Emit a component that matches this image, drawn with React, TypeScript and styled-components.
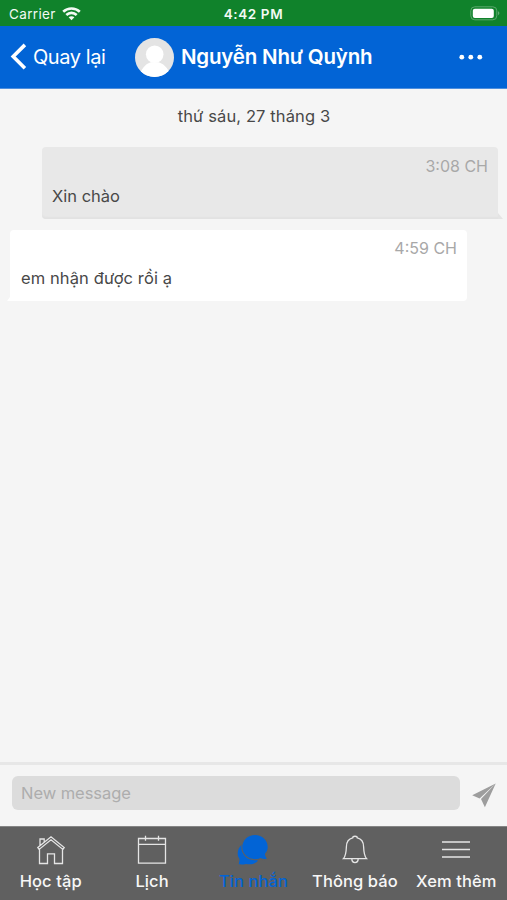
import React from 'react';
import styled, { createGlobalStyle } from 'styled-components';

const GlobalStyle = createGlobalStyle`
  * { box-sizing: border-box; }
  body { margin: 0; background: #f5f5f5; }
  svg { display: block; flex: none; }
`;

const Screen = styled.div`
  width: 507px;
  height: 900px;
  display: flex;
  flex-direction: column;
  overflow: hidden;
  background: #f5f5f5;
  color: #484848;
  font-family: Inter, 'Noto Sans', sans-serif;
  font-size: 17px;
  white-space: nowrap;
`;

const StatusBar = styled.header`
  height: 26px;
  flex: none;
  display: grid;
  grid-template-columns: 1fr auto 1fr;
  align-items: center;
  padding: 1px 7px 0 9px;
  background: #10822b;
  color: #f3faf4;
  font-size: 13.5px;
`;

const Carrier = styled.div`
  display: flex;
  align-items: center;
  gap: 6px;
  letter-spacing: 0.35px;
`;

const Clock = styled.div`
  margin-right: 2px;
  font-weight: 600;
  letter-spacing: 0.6px;
`;

const BatterySlot = styled.div`
  display: flex;
  justify-content: flex-end;
`;

const NavBar = styled.nav`
  height: 63px;
  flex: none;
  display: flex;
  align-items: center;
  padding: 0 24px 0 10px;
  border-bottom: 1px solid #4e8fde;
  background: #0264d6;
  color: #fff;
`;

const Back = styled.div`
  width: 125px;
  display: flex;
  align-items: center;
  gap: 6px;
  font-size: 20px;
  letter-spacing: -0.42px;
`;

const Title = styled.h1`
  flex: 1;
  margin: 0 0 0 7px;
  font-size: 20.5px;
  line-height: 28px;
  font-weight: 600;
  letter-spacing: -0.2px;
`;

const Conversation = styled.main`
  flex: 1;
  display: flex;
  flex-direction: column;
  padding: 14px 9px 0 10px;
`;

const DateLabel = styled.div`
  height: 26px;
  line-height: 26px;
  margin-bottom: 18px;
  text-align: center;
  font-size: 16.5px;
  letter-spacing: 0.12px;
`;

const Bubble = styled.article<{ $mine?: boolean }>`
  position: relative;
  width: ${p => (p.$mine ? 456 : 457)}px;
  height: ${p => (p.$mine ? 72 : 71)}px;
  margin-bottom: 11px;
  padding: ${p => (p.$mine ? '9px 10px 0' : '8px 10px 0 11px')};
  align-self: ${p => (p.$mine ? 'flex-end' : 'flex-start')};
  border-radius: ${p => (p.$mine ? '4px 4px 0 4px' : '4px 4px 4px 0')};
  background: ${p => (p.$mine ? '#e8e8e8' : '#fff')};
  box-shadow: ${p => (p.$mine ? 'inset 0 -3px 2px -1px #e2e2e2' : 'none')};

  &::after {
    content: '';
    position: absolute;
    bottom: 0;
    ${p => (p.$mine ? 'left: 100%' : 'right: 100%')};
    width: ${p => (p.$mine ? 5 : 3)}px;
    height: ${p => (p.$mine ? 6 : 4)}px;
    background: ${p => (p.$mine ? '#e4e4e4' : '#fff')};
    clip-path: ${p => (p.$mine ? 'polygon(0 0, 100% 100%, 0 100%)' : 'polygon(100% 0, 100% 100%, 0 100%)')};
  }
`;

const Time = styled.div`
  height: 20px;
  line-height: 20px;
  text-align: right;
  font-size: 16px;
  color: #a8a8a8;
`;

const Message = styled.p<{ $tracking: number }>`
  margin: 8px 0 0;
  line-height: 24px;
  font-size: 16.5px;
  letter-spacing: ${p => p.$tracking}px;
`;

const Composer = styled.form`
  height: 64px;
  flex: none;
  display: flex;
  align-items: flex-start;
  gap: 12px;
  padding: 11px 11px 0 12px;
  border-top: 3px solid #e7e7e7;
  background: #f5f5f5;
`;

const MessageField = styled.input`
  width: 448px;
  height: 34px;
  padding: 0 9px;
  border: 0;
  border-radius: 6px;
  outline: 0;
  background: #dcdcdc;
  font: 16.5px Inter, sans-serif;
  letter-spacing: -0.05px;
  &::placeholder { color: #adadad; opacity: 1; }
`;

const SendIcon = styled.svg`
  margin-top: 7px;
`;

const TabBar = styled.nav`
  height: 74px;
  flex: none;
  display: grid;
  grid-template-columns: repeat(5, 1fr);
  border-top: 1px solid #858585;
  background: #606060;
`;

const Tab = styled.div<{ $active?: boolean }>`
  display: flex;
  flex-direction: column;
  align-items: center;
  padding-top: 8px;
  color: ${p => (p.$active ? '#0264d6' : '#f7f7f7')};
  font-size: 16.5px;
  font-weight: 500;
  line-height: 24px;
  letter-spacing: 0.08px;
  svg { margin-bottom: 3px; }
`;

const HomeIcon = () => (
  <svg width="30" height="31" viewBox="0 0 30 31" fill="none" stroke="#e5e5e5" strokeWidth="1.3">
    <path d="M1.8 12.6 15 1.8l13.2 10.8-1.3 1.8L15 4.8 3.1 14.4zM3.5 14v14.5h8V18.9h7v9.6h8V14M4 10.4V4h4.2v2.9" />
  </svg>
);

const CalendarIcon = () => (
  <svg width="30" height="31" viewBox="0 0 30 31" fill="none" stroke="#e5e5e5" strokeWidth="1.3">
    <path d="M1.5 3.5h27v24.7h-27zM1.5 9.4h27M8.5.8v5M21.5.8v5" />
  </svg>
);

const ChatIcon = () => (
  <svg width="32" height="31" viewBox="0 0 32 31" fill="#0264d6">
    <path d="M5 9.5C2.2 11.8.7 15 .7 18.7c0 2 .7 3.7 1.9 5.2-.1 2.1-.6 3.4-.8 5.4 2.6.2 5 .1 7.2-.4 4.5 1 8.6.2 11.8-2.9L16 17Z" />
    <path
      d="M18 0C10.8 0 5.3 5.4 5.3 12.1S10.8 24.2 18 24.2c2 0 4-.4 5.6-1.2 1.9 1 4.3 1.5 6.3.7-1.2-1.4-2-3.2-2-4.9 1.8-2 2.8-4.3 2.8-6.9C30.7 5.3 25.1 0 18 0Z"
      stroke="#606060"
      strokeWidth="2"
      paintOrder="stroke"
    />
  </svg>
);

const BellIcon = () => (
  <svg width="30" height="31" viewBox="0 0 30 31" fill="none" stroke="#e5e5e5" strokeWidth="1.3">
    <path d="M12.7 2.9c.1-2.2 4.5-2.2 4.6 0 4.4 1 6.2 4.3 6.3 8.8.2 5.4.7 9.3 3 12H3.4c2.3-2.7 2.8-6.6 3-12 .1-4.5 1.9-7.8 6.3-8.8ZM11.8 23.9c.2 4.9 6.2 4.9 6.4 0" />
  </svg>
);

const MenuIcon = () => (
  <svg width="30" height="31" viewBox="0 0 30 31" fill="none" stroke="#e5e5e5" strokeWidth="1.5">
    <path d="M1 7h28M1 14.5h28M1 22h28" />
  </svg>
);

export default function App() {
  return (
    <Screen>
      <GlobalStyle />
      <StatusBar>
        <Carrier>
          Carrier
          <svg width="19" height="14" viewBox="0 0 19 14" fill="none" stroke="#f3faf4" strokeWidth="2.6">
            <path d="M1.2 4.7C5.8.4 13.2.4 17.8 4.7M4.3 8c3-2.9 7.4-2.9 10.4 0" />
            <path d="M9.5 13.2 6.6 10.3c1.6-1.5 4.2-1.5 5.8 0Z" fill="#f3faf4" stroke="none" />
          </svg>
        </Carrier>
        <Clock>4:42 PM</Clock>
        <BatterySlot>
          <svg width="30" height="15" viewBox="0 0 30 15">
            <rect x=".8" y=".8" width="26" height="13" rx="4" fill="none" stroke="#5ca86d" />
            <rect x="2.8" y="2.7" width="21" height="9.2" rx="2" fill="#fff" />
            <path d="M28.2 5.3c1.5.7 1.5 3.2 0 3.9Z" fill="#72b681" />
          </svg>
        </BatterySlot>
      </StatusBar>
      <NavBar>
        <Back>
          <svg width="17" height="28" viewBox="0 0 17 28" fill="none" stroke="#fff" strokeWidth="3.6">
            <path d="M14.9 1.9 3.2 13.5l11.7 11.7" />
          </svg>
          Quay lại
        </Back>
        <svg width="39" height="39" viewBox="0 0 39 39">
          <defs><clipPath id="avatar"><circle cx="19.5" cy="19.5" r="19.5" /></clipPath></defs>
          <g clipPath="url(#avatar)">
            <path fill="#e4e4e4" d="M0 0h39v39H0z" />
            <circle cx="19.7" cy="16.2" r="8.8" fill="#fff" />
            <path fill="#fff" d="M5 39c0-7 5-12.8 10.6-14.7h8.2C29.4 26.2 35 32 35 39Z" />
          </g>
        </svg>
        <Title>Nguyễn Như Quỳnh</Title>
        <svg width="24" height="6" viewBox="0 0 24 6" fill="#fff">
          <circle cx="2.8" cy="3.2" r="2.4" /><circle cx="11.8" cy="3.2" r="2.4" /><circle cx="20.8" cy="3.2" r="2.4" />
        </svg>
      </NavBar>
      <Conversation>
        <DateLabel>thứ sáu, 27 tháng 3</DateLabel>
        <Bubble $mine>
          <Time>3:08 CH</Time>
          <Message $tracking={0}>Xin chào</Message>
        </Bubble>
        <Bubble>
          <Time>4:59 CH</Time>
          <Message $tracking={0.1}>em nhận được rồi ạ</Message>
        </Bubble>
      </Conversation>
      <Composer>
        <MessageField placeholder="New message" />
        <SendIcon width="24" height="25" viewBox="0 0 24 25" fill="#9d9d9d">
          <path d="M23.7.5.2 12.2l7.4 3.2ZM23.7.5 9 16.1l3.9 8.2Z" />
        </SendIcon>
      </Composer>
      <TabBar>
        <Tab><HomeIcon />Học tập</Tab>
        <Tab><CalendarIcon />Lịch</Tab>
        <Tab $active><ChatIcon />Tin nhắn</Tab>
        <Tab><BellIcon />Thông báo</Tab>
        <Tab><MenuIcon />Xem thêm</Tab>
      </TabBar>
    </Screen>
  );
}
